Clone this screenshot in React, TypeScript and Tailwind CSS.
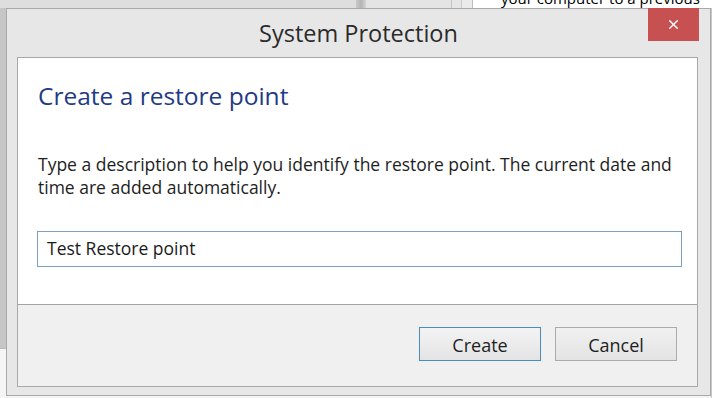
import { X } from "lucide-react";

export default function App() {
  return (
    <div className="w-[714px] h-[398px] overflow-hidden bg-[#f3f3f3] flex flex-col font-['Open_Sans',sans-serif] text-[#1e1e1e]">
      {/* ── Window behind (top edge) ─────────────────────── */}
      <div className="h-[8px] flex shrink-0 overflow-hidden">
        <div className="w-[356px] bg-[#dedede]" />
        <div className="w-[10px] bg-gradient-to-r from-[#c9c9c9] via-[#b4b4b4] to-[#d4d4d4]" />
        <div className="w-[86px] bg-[#e4e4e4] border-r border-[#c4c4c4]" />
        <div className="w-[10px] bg-[#e6e6e6] border-r border-[#c9c9c9]" />
        <div className="w-[11px] bg-[#ebebeb] border-r border-[#bdbdbd]" />
        <div className="flex-1 bg-white pl-[28px]">
          <p className="-mt-[12px] text-[15px] leading-[20px] text-black whitespace-nowrap">
            your computer to a previous
          </p>
        </div>
      </div>

      <div className="flex flex-1 min-h-0">
        {/* left sliver of the window behind */}
        <div className="w-[6px] flex flex-col">
          <div className="h-[340px] bg-[#c6c6c6]" />
          <div className="flex-1 bg-[#f5f5f5] border-t border-[#b9b9b9]" />
        </div>

        {/* ── Dialog ─────────────────────────────────────── */}
        <div className="w-[705px] h-[388px] border border-[#a9a9a9] bg-[#e7e7e7] flex flex-col">
          {/* Title bar */}
          <div className="h-[48px] grid grid-cols-[1fr_auto_1fr] shrink-0">
            <div />
            <h1 className="pt-[13px] text-[23.5px] leading-none text-[#2b2b2b]">System Protection</h1>
            <div className="flex justify-end pr-[11px]">
              <button className="w-[51px] h-[33px] bg-[#c75050] flex items-center justify-center -mt-px">
                <X size={15} strokeWidth={2.4} className="text-white" />
              </button>
            </div>
          </div>

          {/* Client area */}
          <div className="flex-1 ml-[10px] mr-[12px] mb-[8px] border border-[#a8a8a8] flex flex-col">
            <div className="flex-1 bg-white pl-[19px] pr-[15px] pt-[22px]">
              <h2 className="pl-px text-[24.5px] leading-[32px] text-[#1f3b85]">Create a restore point</h2>
              <p className="pl-px mt-[41px] text-[17.5px] leading-[23px] text-[#1e1e1e]">
                Type a description to help you identify the restore point. The current date and time are added automatically.
              </p>
              <div className="mt-[32px] h-[36px] border border-[#7c9fc3] flex items-center pl-[9px] pb-[2px]">
                <span className="text-[17.5px] text-[#1a1a1a]">Test Restore point</span>
              </div>
            </div>
            <div className="h-[82px] shrink-0 border-t border-[#a3a3a3] bg-[#f0f0f0] flex justify-end items-start gap-[14px] pt-[22px] pr-[20px]">
              <button className="w-[122px] h-[34px] border border-[#4a8bc0] bg-gradient-to-b from-[#f3f3f3] to-[#e4e4e4] text-[18px] leading-[30px] pt-[2px] text-[#1e1e1e]">
                Create
              </button>
              <button className="w-[122px] h-[34px] border border-[#acacac] bg-gradient-to-b from-[#f1f1f1] to-[#e3e3e3] text-[18px] leading-[30px] pt-[2px] text-[#1e1e1e]">
                Cancel
              </button>
            </div>
          </div>
        </div>

        {/* right sliver of the window behind */}
        <div className="flex-1 bg-white border-l border-[#c8c8c8]" />
      </div>
    </div>
  );
}
